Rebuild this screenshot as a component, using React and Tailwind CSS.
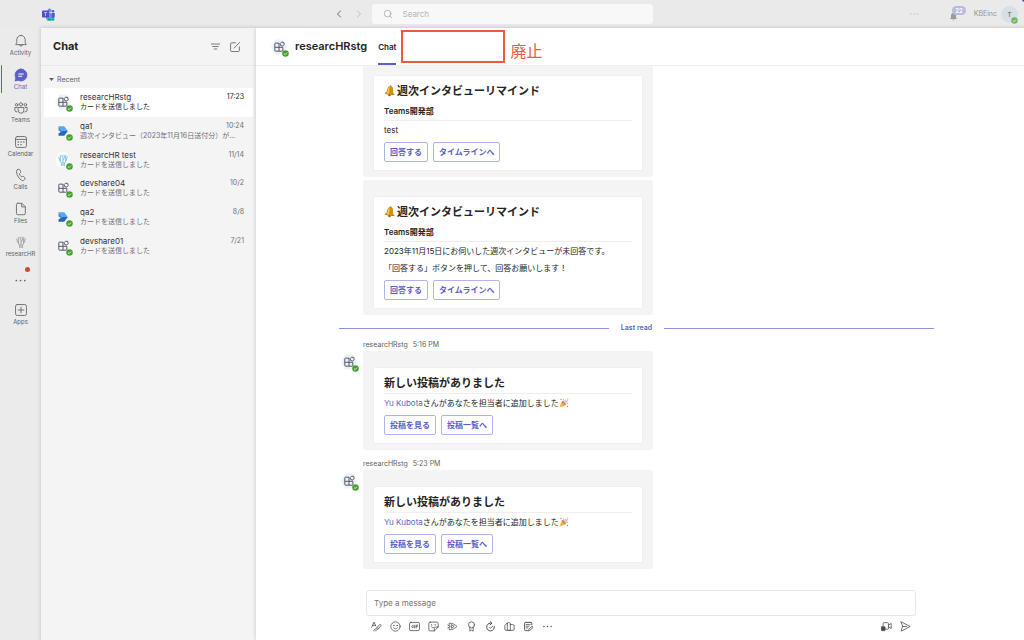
import { useState } from "react";
import clsx from "clsx";
import { ChevronLeft, ChevronRight, Search } from "lucide-react";

// ── Icons ─────────────────────────────────────────────────────────────────────
const Icon = ({ size = 14, width = 1.2, className, children }) => (
  <svg
    width={size}
    height={size}
    viewBox="0 0 20 20"
    fill="none"
    stroke="currentColor"
    strokeWidth={width}
    strokeLinecap="round"
    strokeLinejoin="round"
    className={clsx("shrink-0", className)}
    aria-hidden="true"
  >
    {children}
  </svg>
);

const BellIcon = () => (
  <Icon>
    <path d="M10 2a6 6 0 0 0-6 6v4l-1.5 3.2h15L16 12V8a6 6 0 0 0-6-6Z" />
    <path d="M7.6 15.4a2.5 2.5 0 0 0 4.8 0" />
  </Icon>
);

const ChatIcon = () => (
  <Icon>
    <path d="M10 1.5a8.5 8.5 0 1 1-4 16L1.5 18.6l1.1-4.4A8.5 8.5 0 0 1 10 1.5Z" fill="currentColor" />
    <path d="M6.8 8.5h6.5M6.8 11.8h4.2" stroke="white" strokeWidth="1.6" />
  </Icon>
);

const TeamsIcon = () => (
  <Icon>
    <circle cx="10" cy="4.8" r="2.3" />
    <circle cx="3.8" cy="5.4" r="1.8" />
    <circle cx="16.2" cy="5.4" r="1.8" />
    <path d="M6 9.3h8v4.2a4 4 0 0 1-8 0Z" />
    <path d="M4 9.3H1.2v3.4a3 3 0 0 0 3.2 3M16 9.3h2.8v3.4a3 3 0 0 1-3.2 3" />
  </Icon>
);

const CalendarIcon = () => (
  <Icon>
    <rect x="2.2" y="2.2" width="15.6" height="15.6" rx="2.6" />
    <path d="M2.2 6.3h15.6" />
    <path d="M6 10h.1M10 10h.1M14 10h.1M6 13.8h.1M10 13.8h.1" strokeWidth="2" />
  </Icon>
);

const CallsIcon = () => (
  <Icon>
    <path d="m5.3 2.3 1.3-.4c.9-.2 1.7.2 2 1l.9 2c.3.7.1 1.5-.4 2L7.7 8.2c.4 1.6 1.5 3.4 2.8 4.4l1.8-.6c.7-.2 1.5 0 1.9.6l1.3 1.7c.5.7.4 1.6-.1 2.2l-.9.9c-.9.8-2.1 1-3.2.4C7.5 15.8 4.3 11 3.5 5.6c-.2-1.5.5-2.9 1.8-3.3Z" />
  </Icon>
);

const FilesIcon = () => (
  <Icon>
    <path d="M5.5 1.8h5.7l5 5v9.4a2 2 0 0 1-2 2H5.5a2 2 0 0 1-2-2V3.8a2 2 0 0 1 2-2Z" />
    <path d="M11 2v5h5" />
  </Icon>
);

const CoralIcon = ({ size = 14, className }) => (
  <Icon size={size} width={1.4} className={className}>
    <path d="M10 18v-5M8 18v-3.5M12 18v-3.5M8 14.5 5 10 4 6M10 13V8L8.5 3M12 14.5l3-4.5 1-5M6.5 12V8L6 3.5M13.5 12V7l.5-3.5M10 10l2-3-.5-4" />
  </Icon>
);

const PlusBoxIcon = () => (
  <Icon>
    <rect x="2.2" y="2.2" width="15.6" height="15.6" rx="2.5" />
    <path d="M10 6v8M6 10h8" />
  </Icon>
);

const FilterIcon = () => (
  <Icon size={11} width={1.5}>
    <path d="M2.5 5.5h15M5 10h10M7.5 14.5h5" />
  </Icon>
);

const ComposeIcon = () => (
  <Icon size={12} width={1.4}>
    <path d="M10.5 3h-6a1.8 1.8 0 0 0-1.8 1.8v11a1.8 1.8 0 0 0 1.8 1.8h11a1.8 1.8 0 0 0 1.8-1.8v-6" />
    <path d="M8.5 11.8 17.5 2.5" />
  </Icon>
);

const DotsIcon = ({ size = 12 }) => (
  <Icon size={size} width={2.6}>
    <path d="M3.5 10h.1M10 10h.1M16.5 10h.1" />
  </Icon>
);

const TeamsLogo = () => (
  <svg width="13" height="13" viewBox="0 0 26 26" aria-hidden="true">
    <circle cx="15" cy="5" r="4" fill="#7b83eb" />
    <circle cx="22" cy="6.5" r="2.6" fill="#5059c9" />
    <path d="M18 10h7.5v7a4 4 0 0 1-7.5 1.5Z" fill="#5059c9" />
    <path d="M8 10h12v9a6 6 0 0 1-12 0Z" fill="#7b83eb" />
    <rect x="0" y="5" width="14" height="14" rx="1.3" fill="#4b53bc" />
    <path d="M3.8 9h6.5M7 9v7" stroke="#c9ccf5" strokeWidth="1.6" />
    <rect x="10" y="20" width="15" height="5.5" rx="1.5" fill="#35bfc0" />
    <path d="M13 24v-2.5l2 2.5v-2.5M17 22v2h1.5M21 22l.8 2 .8-1.5.8 1.5" stroke="#11505a" strokeWidth="0.8" fill="none" />
  </svg>
);

const BellEmoji = () => (
  <svg width="12" height="12" viewBox="0 0 24 24" className="shrink-0" role="img" aria-label="bell">
    <g transform="rotate(8 12 12)">
      <circle cx="12" cy="20" r="2.6" fill="#9a5b12" />
      <path d="M12 2c-4 0-6 3.5-6 8 0 4-1.5 5.5-4 7.5 1 2.5 19 2.5 20 0-2.5-2-4-3.5-4-7.5 0-4.5-2-8-6-8Z" fill="#d0921a" />
      <path d="M10 3.5c-2 1.5-2.5 4-2.5 7 0 3-.5 5-2 6.5 2 .8 4 .9 5 .8Z" fill="#f2cc52" />
      <path d="M2 17.500c3 1.7 17 1.7 20 0-.5 2.7-19.5 2.7-20 0Z" fill="#a8660f" />
      <circle cx="12" cy="2.2" r="1.6" fill="#c4831a" />
    </g>
  </svg>
);

const PartyEmoji = () => (
  <svg width="10" height="10" viewBox="0 0 20 20" className="shrink-0" role="img" aria-label="party popper">
    <path d="M1 19 5.5 6.5l8 8Z" fill="#f7bf45" />
    <path d="m3 13.5 3.5 3.5M4.5 10l6 5.5" stroke="#e8853c" strokeWidth="1.2" />
    <ellipse cx="9.8" cy="10.2" rx="5.5" ry="1.8" transform="rotate(45 9.8 10.2)" fill="#c98645" />
    <path d="M9 8c2-2 1-5-1-6M12 11c2-2 5-2 6 1" stroke="#f07c9c" strokeWidth="1.6" fill="none" />
    <path d="M11 9c1-3 3-3 3-6M13 8l5-3" stroke="#7fa9e8" strokeWidth="1.6" fill="none" />
    <circle cx="4" cy="3" r="1.3" fill="#ee6a55" />
    <circle cx="17.5" cy="2" r="1.3" fill="#f2b632" />
    <circle cx="17" cy="17" r="1.3" fill="#ee6a55" />
  </svg>
);

// ── Avatar ────────────────────────────────────────────────────────────────────
const Presence = ({ className }) => (
  <svg width="7" height="7" viewBox="0 0 14 14" className={clsx("absolute", className)} aria-label="Available">
    <circle cx="7" cy="7" r="6.5" fill="#46a02d" />
    <path d="m4 7.2 2.2 2.1L10 5.3" stroke="white" strokeWidth="1.6" fill="none" />
  </svg>
);

const Hexagon = ({ fill }) => (
  <path
    d="M9.5 2.5h9a3 3 0 0 1 2.6 1.5l4.5 8.5a3 3 0 0 1 0 3L21.1 24a3 3 0 0 1-2.6 1.5h-9A3 3 0 0 1 6.900 24l-4.500-8.500a3 3 0 0 1 0-3L6.900 4a3 3 0 0 1 2.600-1.500Z"
    fill={fill}
  />
);

const Avatar = ({ kind, plain }) => (
  <span className="relative block size-[18px] shrink-0">
    <svg width="18" height="18" viewBox="0 0 28 28" aria-hidden="true">
      {kind === "grid" && (
        <>
          {!plain && <Hexagon fill="#eff1f4" />}
          <g fill="none" stroke="#4d5468" strokeWidth="1.5">
            <path d="M14 8H8.500a1 1 0 0 0-1 1v10.500a1 1 0 0 0 1 1H19a1 1 0 0 0 1-1V14.500H7.500M14 8v12.500" />
            <path d="m18 6.500 3.300.3.700 3.300-2.200 2.500-3.100-.8-1.100-2.900Z" />
          </g>
        </>
      )}
      {kind === "flow" && (
        <>
          <path d="M7 6.5h9l5.500 7.500H13Z" fill="#5aa7f0" />
          <path d="m13 14-6-7.500v6.500l3.500 3Z" fill="#3f8ee0" />
          <path d="M13 14h8.500L16 21.500H7v-3.500Z" fill="#2468b8" />
        </>
      )}
      {kind === "coral" && <Hexagon fill="#ffffff" />}
    </svg>
    {kind === "coral" && <CoralIcon size={14} className="absolute left-[2px] top-[2px] text-[#7fc4e6]" />}
    <Presence className="-bottom-px -right-px" />
  </span>
);

// ── Header ────────────────────────────────────────────────────────────────────
const TopBar = () => (
  <header className="relative grid h-7 shrink-0 grid-cols-[1fr_281px_1fr] items-center overflow-hidden bg-[#eaeaea]">
    <div className="flex items-center justify-between pl-[42px] pr-[7px]">
      <TeamsLogo />
      <div className="flex gap-2">
        <button aria-label="Back" className="text-[#6b6b6b]">
          <ChevronLeft size={12} strokeWidth={2} />
        </button>
        <button aria-label="Forward" className="text-[#c0c0c0]">
          <ChevronRight size={12} strokeWidth={2} />
        </button>
      </div>
    </div>
    <label className="flex h-5 items-center gap-[10px] rounded-[3px] bg-[#f8f8f8] pl-[11px]">
      <Search size={10} strokeWidth={1.6} className="shrink-0 text-[#999]" />
      <input
        aria-label="Search"
        placeholder="Search"
        className="w-full bg-transparent text-[8px] leading-[10px] outline-none placeholder:text-[#b5b5b5]"
      />
    </label>
    <div className="flex items-center justify-end pr-[6px]">
      <button aria-label="Settings" className="mr-[30px] text-[#b9b9b9]">
        <DotsIcon size={10} />
      </button>
      <span className="relative mr-2 block h-3 w-[17px]">
        <svg width="9" height="9" viewBox="0 0 18 18" className="absolute -bottom-px left-0" aria-hidden="true">
          <path d="M9 2a5 5 0 0 0-5 5v4l-2 3h14l-2-3V7a5 5 0 0 0-5-5ZM7 15a2 2 0 0 0 4 0Z" fill="#9b9b9b" />
        </svg>
        <span className="absolute -top-[2px] right-0 rounded-full bg-[#b9bae2] px-[3px] text-[6px] font-semibold leading-[9px] text-white">
          22
        </span>
      </span>
      <span className="mr-1 text-[7px] leading-[10px] text-[#959595]">KBEinc</span>
      <span className="relative flex size-[17px] items-center justify-center rounded-full bg-[#d9e0e5] text-[6px] font-semibold text-[#6d7a86]">
        T
        <Presence className="-bottom-px right-0 opacity-70" />
      </span>
    </div>
    <span className="absolute -right-[3px] -top-[3px] size-[5px] rounded-full bg-[#4b4fc0]" />
  </header>
);

// ── App rail ──────────────────────────────────────────────────────────────────
const railItems = [
  { label: "Activity", icon: <BellIcon /> },
  { label: "Chat", icon: <ChatIcon /> },
  { label: "Teams", icon: <TeamsIcon /> },
  { label: "Calendar", icon: <CalendarIcon /> },
  { label: "Calls", icon: <CallsIcon /> },
  { label: "Files", icon: <FilesIcon /> },
  { label: "researcHR", icon: <CoralIcon className="text-[#a3a3a3]" /> },
];

const RailButton = ({ label, icon, active }) => (
  <button
    className={clsx(
      "relative flex w-full flex-col items-center pt-[6px] text-[6px] leading-[10px]",
      active ? "text-[#5b5fc7]" : "text-[#616161]"
    )}
  >
    {active && <span className="absolute left-px top-[3px] h-[28px] w-px rounded bg-[#5b5fc7]" />}
    {icon}
    <span>{label}</span>
  </button>
);

const Rail = () => (
  <nav className="flex w-[41px] shrink-0 flex-col bg-[#ebebeb]">
    <div className="grid min-h-[235px] grid-rows-7">
      {railItems.map((item) => (
        <RailButton key={item.label} {...item} active={item.label === "Chat"} />
      ))}
    </div>
    <button aria-label="More apps" className="relative flex h-[34px] items-center justify-center text-[#616161]">
      <DotsIcon size={13} />
      <span className="absolute right-[11px] top-1 size-[5px] rounded-full bg-[#cc4a31]" />
    </button>
    <RailButton label="Apps" icon={<PlusBoxIcon />} />
  </nav>
);

// ── Chat list ─────────────────────────────────────────────────────────────────
const chats = [
  { name: "researcHRstg", time: "17:23", text: "カードを送信しました", kind: "grid" },
  { name: "qa1", time: "10:24", text: "週次インタビュー（2023年11月16日送付分）が...", kind: "flow" },
  { name: "researcHR test", time: "11/14", text: "カードを送信しました", kind: "coral" },
  { name: "devshare04", time: "10/2", text: "カードを送信しました", kind: "grid" },
  { name: "qa2", time: "8/8", text: "カードを送信しました", kind: "flow" },
  { name: "devshare01", time: "7/21", text: "カードを送信しました", kind: "grid" },
];

const ChatRow = ({ chat, selected, onSelect }) => (
  <button
    onClick={onSelect}
    className={clsx(
      "flex w-full items-center gap-2 rounded-[2px] pl-[10px] pr-[9px] text-left",
      selected ? "bg-white text-[#242424]" : "text-[#707070]"
    )}
  >
    <Avatar kind={chat.kind} plain={!selected} />
    <span className="min-w-0 flex-1">
      <span className="flex items-center justify-between leading-[10px]">
        <span className="text-[8px] text-[#333]">{chat.name}</span>
        <span className="text-[7px]">{chat.time}</span>
      </span>
      <span className="block whitespace-nowrap text-[7px] leading-[10px]">{chat.text}</span>
    </span>
  </button>
);

const ChatList = () => {
  const [selected, setSelected] = useState("researcHRstg");

  return (
    <aside className="z-10 flex w-[215px] shrink-0 flex-col bg-[#f4f4f4] shadow-[0_0_4px_rgba(0,0,0,0.2)]">
      <div className="flex h-[38px] items-center border-b border-[#e8e8e8] pl-3 pr-[15px] text-[#616161]">
        <h1 className="flex-1 text-[11px] font-bold text-[#242424]">Chat</h1>
        <button aria-label="Filter" className="mr-2">
          <FilterIcon />
        </button>
        <button aria-label="New chat">
          <ComposeIcon />
        </button>
      </div>
      <button className="flex h-[21px] items-center gap-[3px] pl-2 pt-[6px] text-[7px] leading-[10px] text-[#616161]">
        <svg width="5" height="5" viewBox="0 0 10 10" fill="currentColor" aria-hidden="true">
          <path d="M0 2h10L5 8Z" />
        </svg>
        Recent
      </button>
      <div className="mt-px grid min-h-[172px] grid-cols-1 grid-rows-6 px-[3px]">
        {chats.map((chat) => (
          <ChatRow
            key={chat.name}
            chat={chat}
            selected={selected === chat.name}
            onSelect={() => setSelected(chat.name)}
          />
        ))}
      </div>
    </aside>
  );
};

// ── Messages ──────────────────────────────────────────────────────────────────
const Card = ({ title, team, children, actions }) => (
  <div className="max-w-[290px] rounded-[3px] bg-[#f4f4f4] px-[10px] pb-[6px] pt-4">
    <article className="rounded-[2px] border border-[#efefef] bg-white px-[10px] py-2 text-[8px] leading-[12px] text-[#242424]">
      <div className="mb-[3px] border-b border-[#efefef] pb-[3px]">
        <h2 className="flex items-center gap-px whitespace-nowrap text-[11px] font-semibold leading-[14px]">{title}</h2>
        {team && <p className="mt-[7px] font-semibold">{team}</p>}
      </div>
      <div className="flex flex-col gap-[5px]">{children}</div>
      <div className="mt-[6px] flex gap-[5px]">
        {actions.map((action) => (
          <button
            key={action}
            className="h-5 rounded-[2px] border border-[#b1b3ee] px-[5px] font-semibold text-[#5b5fc7]"
          >
            {action}
          </button>
        ))}
      </div>
    </article>
  </div>
);

const reminderTitle = (
  <>
    <BellEmoji />
    週次インタビューリマインド
  </>
);

const Post = ({ time }) => (
  <div className="mb-[9px] pl-6 last:mb-0">
    <p className="mb-px flex gap-[5px] text-[7px] leading-[10px] text-[#616161]">
      <span>researcHRstg</span>
      <time>{time}</time>
    </p>
    <div className="-ml-[23px] flex gap-[5px]">
      <div className="pt-[2px]">
        <Avatar kind="grid" />
      </div>
      <div className="flex-1">
        <Card title="新しい投稿がありました" actions={["投稿を見る", "投稿一覧へ"]}>
          <p className="flex items-center">
            <a href="#yu-kubota" className="text-[#5b5fc7]">
              Yu Kubota
            </a>
            さんがあなたを担当者に追加しました
            <PartyEmoji />
          </p>
        </Card>
      </div>
    </div>
  </div>
);

const Messages = () => (
  <section className="flex min-h-0 flex-1 flex-col justify-end overflow-hidden pb-[21px] pl-[83px] pr-[90px]">
    <div className="flex flex-col gap-[3px] pl-6">
      <Card title={reminderTitle} team="Teams開発部" actions={["回答する", "タイムラインへ"]}>
        <p>test</p>
      </Card>
      <Card title={reminderTitle} team="Teams開発部" actions={["回答する", "タイムラインへ"]}>
        <p>2023年11月15日にお伺いした週次インタビューが未回答です。</p>
        <p>「回答する」ボタンを押して、回答お願いします！</p>
      </Card>
    </div>
    <div className="mb-[7px] mt-2 flex items-center gap-3 text-[7px] font-semibold leading-[10px] text-[#5b5fc7]">
      <span className="h-px flex-1 bg-[#8f92dc]" />
      Last read
      <span className="h-px flex-1 bg-[#8f92dc]" />
    </div>
    <Post time="5:16 PM" />
    <Post time="5:23 PM" />
  </section>
);

// ── Compose box ───────────────────────────────────────────────────────────────
const tools = [
  {
    label: "Format",
    icon: <path d="m1.5 11 4-9 3 7M3 8h5M5 18c-1-3 4-3 6-6l5-6 2.5 2-5.5 6.5c-2 2-5 1-4.5 3.5M11 12l2.5 2" />,
  },
  {
    label: "Emoji",
    icon: (
      <>
        <circle cx="10" cy="10" r="8.5" />
        <path d="M6.5 12.5c1.8 2.2 5.2 2.2 7 0" />
        <path d="M7 8h.1M13 8h.1" strokeWidth="2.5" />
      </>
    ),
  },
  {
    label: "Giphy",
    icon: (
      <>
        <rect x="1" y="2.5" width="18" height="15" rx="2.5" />
        <path d="M7.5 7.8c-3-1-3.5 4.4-.8 4.4h.8v-1.9M10.3 7.5v5M13 12.5v-5h2.8M13 10h2.3" />
      </>
    ),
  },
  {
    label: "Sticker",
    icon: (
      <>
        <path d="M4 2h12a2.5 2.5 0 0 1 2.5 2.5V11l-7 7H4a2.5 2.5 0 0 1-2.5-2.5v-11A2.5 2.5 0 0 1 4 2Z" />
        <path d="M18.5 11H14a2.5 2.5 0 0 0-2.5 2.5V18M6 10.5c1 1.5 2.5 2 4 1.7" />
        <path d="M6.5 7h.1M13 7h.1" strokeWidth="2.5" />
      </>
    ),
  },
  {
    label: "Stream",
    icon: (
      <>
        <path d="M4 7.500V4c5-.5 10 2 14 6-4 4-9 6.500-14 6v-3.500" />
        <path d="M1.500 7.500 6 10l-4.500 2.500M8.500 7l4.500 3-4.500 3Z" />
      </>
    ),
  },
  {
    label: "Praise",
    icon: (
      <>
        <circle cx="10" cy="7" r="5.5" />
        <path d="M7 11.5v7l3-2 3 2v-7" />
      </>
    ),
  },
  {
    label: "Updates",
    icon: (
      <>
        <path d="M17 10a7 7 0 1 1-7-6h2M9.5 1l3 3-3 3" strokeWidth="1.8" />
        <path d="m7.5 11.5 2 2 4.5-4" />
      </>
    ),
  },
  {
    label: "Viva Learning",
    icon: (
      <>
        <path d="M6 17H4a2.500 2.500 0 0 1-2.500-2.500V8L6 3.500M6 5a2 2 0 0 1 2-2h1.500a2 2 0 0 1 2 2v12H8" />
        <path d="M11.500 6.500H16A2.500 2.500 0 0 1 18.500 9v6a2 2 0 0 1-2 2H6V5" />
      </>
    ),
  },
  {
    label: "Approvals",
    icon: (
      <>
        <path d="M16 7V4a1.5 1.5 0 0 0-1.5-1.5h-10A1.5 1.5 0 0 0 3 4v12a1.5 1.5 0 0 0 1.5 1.5H8" strokeWidth="1.8" />
        <path d="M6 6.5h7M6 9.5h5M6 12.5h3M10 17.5l1-3 5.5-5 2 2-5.5 5Z" />
      </>
    ),
  },
];

const ComposeBox = () => (
  <form className="ml-[110px] mr-[108px] shrink-0 pb-1" onSubmit={(e) => e.preventDefault()}>
    <input
      aria-label="Type a message"
      placeholder="Type a message"
      className="block h-[26px] w-full rounded-[3px] border border-[#e6e6e6] bg-white px-[7px] text-[8px] outline-none placeholder:text-[#757575]"
    />
    <div className="flex h-5 items-center gap-2 px-[5px] text-[#4c4c4c]">
      {tools.map((tool) => (
        <button key={tool.label} type="button" aria-label={tool.label}>
          <Icon size={11} width={1.4}>
            {tool.icon}
          </Icon>
        </button>
      ))}
      <button type="button" aria-label="More options">
        <DotsIcon size={11} />
      </button>
      <button type="button" aria-label="Record video clip" className="ml-auto">
        <Icon size={11} width={1.4}>
          <path d="M4 9V4.5A1.5 1.5 0 0 1 5.5 3H12a1.5 1.5 0 0 1 1.5 1.5v9A1.5 1.5 0 0 1 12 15H9M13.5 7.5l5-3v9l-5-3" />
          <rect x="0.5" y="10.5" width="7" height="7" rx="1.5" fill="currentColor" />
        </Icon>
      </button>
      <button aria-label="Send">
        <Icon size={11} width={1.4}>
          <path d="M2 1.5 18.5 10 2 18.5 4.5 10ZM4.5 10H12" />
        </Icon>
      </button>
    </div>
  </form>
);

// ── Conversation ──────────────────────────────────────────────────────────────
const Conversation = () => (
  <main className="z-20 flex min-w-0 flex-1 flex-col bg-white shadow-[0_0_4px_rgba(0,0,0,0.2)]">
    <div className="flex h-[38px] shrink-0 items-center border-b border-[#efefef] pl-[14px]">
      <Avatar kind="grid" />
      <h2 className="ml-[7px] text-[11px] font-semibold text-[#242424]">researcHRstg</h2>
      <button className="ml-[11px] flex h-[37px] items-center border-b-2 border-[#5b5fc7] pt-[2px] text-[8px] font-semibold text-[#242424]">
        Chat
      </button>
      <span className="ml-[5px] h-[33px] w-[104px] border-2 border-[#ec5a40]" />
      <span className="ml-[5px] pt-[8px] text-[16px] leading-[20px] text-[#ec5a40]">廃止</span>
    </div>
    <Messages />
    <ComposeBox />
  </main>
);

const App = () => (
  <div className="flex h-screen flex-col overflow-hidden bg-[#ebebeb] font-['Inter','Noto_Sans_CJK_JP',sans-serif]" lang="ja">
    <TopBar />
    <div className="flex min-h-0 flex-1">
      <Rail />
      <ChatList />
      <Conversation />
    </div>
  </div>
);

export default App;
